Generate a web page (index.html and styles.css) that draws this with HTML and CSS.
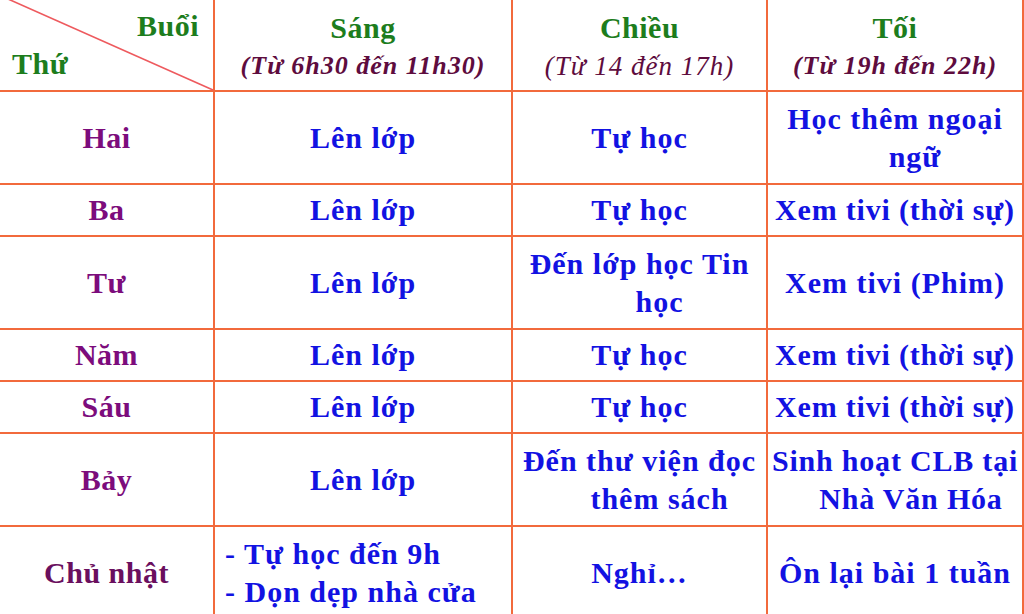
FILE: index.html
```html
<!DOCTYPE html>
<html lang="vi">
<head>
<meta charset="utf-8">
<title>Thời gian biểu</title>
<link rel="stylesheet" href="styles.css">
</head>
<body>
<table class="schedule">
  <colgroup>
    <col class="c-day">
    <col class="c-morning">
    <col class="c-afternoon">
    <col class="c-evening">
  </colgroup>
  <tr class="r-head">
    <td class="corner">
      <svg class="diag" aria-hidden="true"><line x1="8" y1="-1" x2="100%" y2="100%"></line></svg>
      <div class="corner-inner">
        <span class="h-green buoi">Buổi</span>
        <span class="h-green thu">Thứ</span>
      </div>
    </td>
    <td class="head"><div class="h-green">Sáng</div><div class="h-sub">(Từ 6h30 đến 11h30)</div></td>
    <td class="head"><div class="h-green">Chiều</div><div class="h-sub light">(Từ 14 đến 17h)</div></td>
    <td class="head"><div class="h-green">Tối</div><div class="h-sub">(Từ 19h đến 22h)</div></td>
  </tr>
  <tr class="r-tall">
    <td class="day">Hai</td>
    <td class="act">Lên lớp</td>
    <td class="act">Tự học</td>
    <td class="act">Học thêm ngoại<br><span class="l2">ngữ</span></td>
  </tr>
  <tr class="r-short">
    <td class="day">Ba</td>
    <td class="act">Lên lớp</td>
    <td class="act">Tự học</td>
    <td class="act tight">Xem tivi (thời sự)</td>
  </tr>
  <tr class="r-tall">
    <td class="day">Tư</td>
    <td class="act">Lên lớp</td>
    <td class="act">Đến lớp học Tin<br><span class="l2">học</span></td>
    <td class="act">Xem tivi (Phim)</td>
  </tr>
  <tr class="r-short">
    <td class="day">Năm</td>
    <td class="act">Lên lớp</td>
    <td class="act">Tự học</td>
    <td class="act tight">Xem tivi (thời sự)</td>
  </tr>
  <tr class="r-short">
    <td class="day">Sáu</td>
    <td class="act">Lên lớp</td>
    <td class="act">Tự học</td>
    <td class="act tight">Xem tivi (thời sự)</td>
  </tr>
  <tr class="r-tall">
    <td class="day">Bảy</td>
    <td class="act">Lên lớp</td>
    <td class="act">Đến thư viện đọc<br><span class="l2">thêm sách</span></td>
    <td class="act tight">Sinh hoạt CLB tại<br><span class="l2 small">Nhà Văn Hóa</span></td>
  </tr>
  <tr class="r-tall">
    <td class="day dark">Chủ nhật</td>
    <td class="act left">- Tự học đến 9h<br>- Dọn dẹp nhà cửa</td>
    <td class="act">Nghỉ…</td>
    <td class="act">Ôn lại bài 1 tuần</td>
  </tr>
</table>
</body>
</html>
```

FILE: styles.css
```css
html, body {
  margin: 0;
  padding: 0;
  background: #ffffff;
  overflow: hidden;
}

body {
  font-family: "Liberation Serif", "Times New Roman", serif;
}

.schedule {
  border-collapse: collapse;
  table-layout: fixed;
  width: 1023px;
}

.c-day { width: 214px; }
.c-morning { width: 298px; }
.c-afternoon { width: 255px; }
.c-evening { width: 256px; }

.schedule td {
  border: 2px solid #f26a3c;
  padding: 0;
  text-align: center;
  vertical-align: middle;
  line-height: 38px;
}

.schedule tr > td:first-child { border-left: none; }
.schedule tr:first-child > td { border-top: none; }

.r-head td { height: 90px; }
.r-tall td { height: 91px; }
.r-short td { height: 50px; }

.schedule .head {
  padding-top: 3px;
  height: 87px;
}

.corner {
  position: relative;
  text-align: left;
}

.diag {
  position: absolute;
  left: 0;
  top: 0;
  width: 100%;
  height: 100%;
  overflow: visible;
}

.diag line {
  stroke: #ee5a5e;
  stroke-width: 1.6;
}

.corner-inner {
  display: flex;
  flex-direction: column;
  padding: 0 14px 0 12px;
}

.buoi { align-self: flex-end; }
.thu { align-self: flex-start; }

.h-green {
  color: #1d7d1d;
  font-weight: bold;
  font-size: 30px;
  letter-spacing: 0.5px;
}

.h-sub {
  color: #5e0c3e;
  font-weight: bold;
  font-style: italic;
  font-size: 26px;
  letter-spacing: 1px;
}

.h-sub.light {
  font-weight: normal;
  font-size: 27px;
}

.day {
  color: #7c0c7c;
  font-weight: bold;
  font-size: 30px;
  letter-spacing: 0.5px;
}

.day.dark { color: #6a0f5e; }

.act {
  color: #1212e2;
  font-weight: bold;
  font-size: 30px;
  letter-spacing: 1px;
}

.act.tight { letter-spacing: 0.8px; }

.act.left {
  text-align: left;
  padding-left: 10px;
}

.l2 {
  display: inline-block;
  margin-left: 40px;
}

.l2.small { margin-left: 32px; }
```
